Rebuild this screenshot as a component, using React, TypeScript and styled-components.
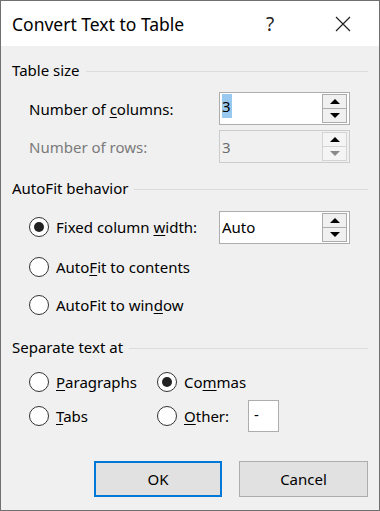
import React from 'react';
import styled, { createGlobalStyle } from 'styled-components';

const GlobalStyle = createGlobalStyle`
  html, body {
    margin: 0;
    padding: 0;
    background: #f0f0f0;
  }
  * {
    box-sizing: border-box;
  }
`;

const Window = styled.div`
  width: 380px;
  height: 511px;
  border: 1px solid #707070;
  display: flex;
  flex-direction: column;
  font-family: 'Noto Sans', 'Open Sans', sans-serif;
  font-size: 15px;
  color: #000;
  background: #f0f0f0;
`;

const TitleBar = styled.div`
  height: 45px;
  background: #fff;
  display: flex;
  align-items: center;
  padding-left: 11px;
  flex-shrink: 0;
`;

const Title = styled.div`
  flex: 1;
  font-size: 17.5px;
  margin-top: 1px;
`;

const TitleButton = styled.div<{ $width: number }>`
  width: ${(p) => p.$width}px;
  height: 45px;
  display: flex;
  align-items: center;
  justify-content: center;
  font-size: 19px;
  color: #222;
`;

const Body = styled.div`
  flex: 1;
  padding: 12px 11px 0 11px;
  display: flex;
  flex-direction: column;
`;

const GroupHeader = styled.div<{ $top?: number }>`
  height: 24px;
  margin-top: ${(p) => p.$top ?? 0}px;
  display: flex;
  align-items: center;
  gap: 6px;
  &::after {
    content: '';
    flex: 1;
    height: 1px;
    background: #dcdcdc;
    margin-top: 2px;
  }
`;

const Row = styled.div<{ $top?: number; $height?: number }>`
  height: ${(p) => p.$height ?? 32}px;
  margin-top: ${(p) => p.$top ?? 0}px;
  display: flex;
  align-items: center;
  padding-left: 17px;
`;

const FieldLabel = styled.div<{ $disabled?: boolean; $width?: number }>`
  width: ${(p) => p.$width ?? 190}px;
  color: ${(p) => (p.$disabled ? '#7a7a7a' : '#000')};
  white-space: nowrap;
`;

const U = styled.span`
  text-decoration: underline;
  text-underline-offset: 2px;
`;

const SpinBox = styled.div<{ $disabled?: boolean; $height?: number }>`
  width: 131px;
  height: ${(p) => p.$height ?? 33}px;
  border: 1px solid ${(p) => (p.$disabled ? '#cccccc' : '#adadad')};
  background: ${(p) => (p.$disabled ? '#f0f0f0' : '#fff')};
  display: flex;
  align-items: stretch;
  padding: 1px 2px 1px 2px;
`;

const SpinValue = styled.div<{ $disabled?: boolean }>`
  flex: 1;
  display: flex;
  align-items: center;
  color: ${(p) => (p.$disabled ? '#6d6d6d' : '#000')};
  font-size: 15px;
`;

const Selected = styled.span`
  background: #99c9ef;
  padding: 0 1px 0 0;
  line-height: 24px;
  margin-top: -6px;
`;

const SpinButtons = styled.div`
  width: 25px;
  display: flex;
  flex-direction: column;
`;

const SpinButton = styled.div<{ $disabled?: boolean }>`
  flex: 1;
  border: 1px solid ${(p) => (p.$disabled ? '#d4d4d4' : '#acacac')};
  background: ${(p) => (p.$disabled ? '#f4f4f4' : '#f0f0f0')};
  display: flex;
  align-items: center;
  justify-content: center;
  & + & {
    border-top: none;
  }
`;

const Arrow = styled.div<{ $down?: boolean; $disabled?: boolean }>`
  width: 0;
  height: 0;
  border-left: 5.5px solid transparent;
  border-right: 5.5px solid transparent;
  ${(p) =>
    p.$down
      ? `border-top: 5.5px solid ${p.$disabled ? '#8a8a8a' : '#000'};`
      : `border-bottom: 5.5px solid ${p.$disabled ? '#8a8a8a' : '#000'};`}
`;

const RadioItem = styled.label<{ $width?: number }>`
  display: flex;
  align-items: center;
  width: ${(p) => (p.$width ? `${p.$width}px` : 'auto')};
  white-space: nowrap;
`;

const RadioCircle = styled.span<{ $checked?: boolean }>`
  width: 20px;
  height: 20px;
  border-radius: 50%;
  border: 1.6px solid #333;
  background: #fff;
  margin-right: 7px;
  display: flex;
  align-items: center;
  justify-content: center;
  flex-shrink: 0;
  &::after {
    content: '';
    display: ${(p) => (p.$checked ? 'block' : 'none')};
    width: 10px;
    height: 10px;
    border-radius: 50%;
    background: #222;
  }
`;

const SmallInput = styled.div`
  width: 31px;
  height: 32px;
  border: 1px solid #adadad;
  background: #fff;
  margin-left: 19px;
  padding: 3px 0 0 5px;
  font-size: 15px;
`;

const ButtonBar = styled.div`
  margin-top: 29px;
  display: flex;
  justify-content: flex-end;
  gap: 17px;
`;

const Button = styled.button<{ $default?: boolean; $width: number }>`
  width: ${(p) => p.$width}px;
  height: 36px;
  font-family: inherit;
  font-size: 15px;
  color: #000;
  background: #e1e1e1;
  border: ${(p) => (p.$default ? '2px solid #0078d7' : '1px solid #adadad')};
  padding: 0;
  margin: 0;
`;

const CloseIcon = () => (
  <svg width="16" height="16" viewBox="0 0 16 16">
    <path d="M1 1 L15 15 M15 1 L1 15" stroke="#222" strokeWidth="1.2" fill="none" />
  </svg>
);

const Spinner = ({ value, disabled, selected }: { value: string; disabled?: boolean; selected?: boolean }) => (
  <SpinBox $disabled={disabled}>
    <SpinValue $disabled={disabled}>{selected ? <Selected>{value}</Selected> : value}</SpinValue>
    <SpinButtons>
      <SpinButton $disabled={disabled}>
        <Arrow />
      </SpinButton>
      <SpinButton $disabled={disabled}>
        <Arrow $down $disabled={disabled} />
      </SpinButton>
    </SpinButtons>
  </SpinBox>
);

const Radio = ({ checked, children, width }: { checked?: boolean; children: React.ReactNode; width?: number }) => (
  <RadioItem $width={width}>
    <RadioCircle $checked={checked} />
    <span>{children}</span>
  </RadioItem>
);

export default function App() {
  return (
    <>
      <GlobalStyle />
      <Window>
        <TitleBar>
          <Title>Convert Text to Table</Title>
          <TitleButton $width={74}>?</TitleButton>
          <TitleButton $width={72}>
            <CloseIcon />
          </TitleButton>
        </TitleBar>
        <Body>
          <GroupHeader>Table size</GroupHeader>
          <Row $top={10} $height={33}>
            <FieldLabel>
              Number of <U>c</U>olumns:
            </FieldLabel>
            <Spinner value="3" selected />
          </Row>
          <Row $top={5} $height={33}>
            <FieldLabel $disabled>Number of rows:</FieldLabel>
            <Spinner value="3" disabled />
          </Row>

          <GroupHeader $top={13}>AutoFit behavior</GroupHeader>
          <Row $top={11}>
            <Radio checked width={190}>
              Fixed column <U>w</U>idth:
            </Radio>
            <Spinner value="Auto" />
          </Row>
          <Row $top={8}>
            <Radio>
              Auto<U>F</U>it to contents
            </Radio>
          </Row>
          <Row $top={6}>
            <Radio>
              AutoFit to win<U>d</U>ow
            </Radio>
          </Row>

          <GroupHeader $top={14}>Separate text at</GroupHeader>
          <Row $top={7}>
            <Radio width={128}>
              <U>P</U>aragraphs
            </Radio>
            <Radio checked>
              Co<U>m</U>mas
            </Radio>
          </Row>
          <Row $top={2}>
            <Radio width={128}>
              <U>T</U>abs
            </Radio>
            <Radio>
              <U>O</U>ther:
            </Radio>
            <SmallInput>-</SmallInput>
          </Row>

          <ButtonBar>
            <Button $default $width={128}>
              OK
            </Button>
            <Button $width={129}>Cancel</Button>
          </ButtonBar>
        </Body>
      </Window>
    </>
  );
}
